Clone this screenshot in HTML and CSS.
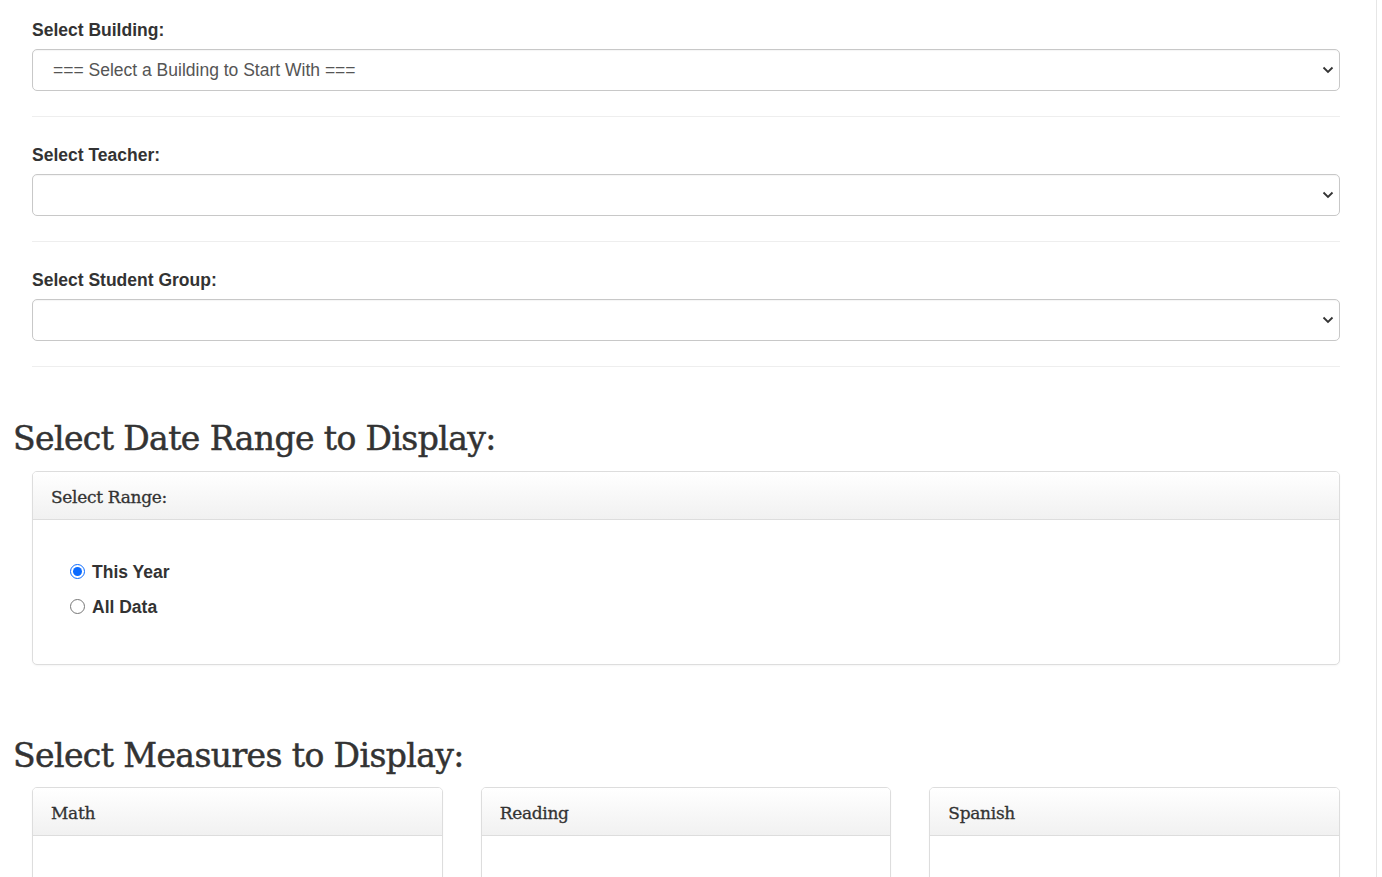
FILE: index.html
```html
<!DOCTYPE html>
<html>
<head>
<meta charset="utf-8">
<title>Select Data</title>
<link rel="stylesheet" href="styles.css">
</head>
<body>
<div class="page">
  <div class="filters">
    <div class="group">
      <label class="field-label" for="building">Select Building:</label>
      <div class="select-wrap">
        <select id="building" class="select">
          <option>=== Select a Building to Start With ===</option>
        </select>
        <svg class="chev" width="12" height="8" viewBox="0 0 12 8"><path d="M1.5 1.5 L6 6 L10.5 1.5" fill="none" stroke="#333" stroke-width="1.8"/></svg>
      </div>
    </div>
    <hr class="sep">
    <div class="group">
      <label class="field-label" for="teacher">Select Teacher:</label>
      <div class="select-wrap">
        <select id="teacher" class="select"><option></option></select>
        <svg class="chev" width="12" height="8" viewBox="0 0 12 8"><path d="M1.5 1.5 L6 6 L10.5 1.5" fill="none" stroke="#333" stroke-width="1.8"/></svg>
      </div>
    </div>
    <hr class="sep">
    <div class="group">
      <label class="field-label" for="group">Select Student Group:</label>
      <div class="select-wrap">
        <select id="group" class="select"><option></option></select>
        <svg class="chev" width="12" height="8" viewBox="0 0 12 8"><path d="M1.5 1.5 L6 6 L10.5 1.5" fill="none" stroke="#333" stroke-width="1.8"/></svg>
      </div>
    </div>
    <hr class="sep">
  </div>

  <h2 class="section-title">Select Date Range to Display:</h2>
  <div class="panel range-panel">
    <div class="panel-heading">Select Range:</div>
    <div class="panel-body range-body">
      <label class="radio-row"><input type="radio" name="range" checked><span>This Year</span></label>
      <label class="radio-row"><input type="radio" name="range"><span>All Data</span></label>
    </div>
  </div>

  <h2 class="section-title measures-title">Select Measures to Display:</h2>
  <div class="measures">
    <div class="panel">
      <div class="panel-heading">Math</div>
      <div class="panel-body measure-body"></div>
    </div>
    <div class="panel">
      <div class="panel-heading">Reading</div>
      <div class="panel-body measure-body"></div>
    </div>
    <div class="panel">
      <div class="panel-heading">Spanish</div>
      <div class="panel-body measure-body"></div>
    </div>
  </div>
</div>
</body>
</html>
```

FILE: styles.css
```css
html, body {
  margin: 0;
  padding: 0;
  background: #fff;
  overflow: hidden;
}
body {
  font-family: "Liberation Sans", Arial, sans-serif;
  color: #333;
  font-size: 17.5px;
}
.page {
  width: 1377px;
  height: 877px;
  border-right: 1px solid #e6e6e6;
  padding-left: 13px;
  box-sizing: border-box;
}
.filters {
  padding: 18px 0 0 19px;
  width: 1308px;
}
.field-label {
  display: block;
  font-weight: bold;
  font-size: 17.5px;
  line-height: 25px;
  margin-bottom: 6px;
}
.select-wrap {
  position: relative;
}
.select {
  display: block;
  width: 100%;
  height: 42px;
  border: 1px solid #c8c8c8;
  border-radius: 5px;
  background: #fff;
  font-family: "Liberation Sans", Arial, sans-serif;
  font-size: 17.5px;
  color: #555;
  padding: 0 20px;
  -webkit-appearance: none;
  appearance: none;
  box-shadow: inset 0 1px 1px rgba(0,0,0,0.04);
}
.chev {
  position: absolute;
  right: 6px;
  top: 17px;
}
.sep {
  border: 0;
  border-top: 1px solid #eee;
  margin: 25px 0 26px;
}
.section-title {
  font-family: "DejaVu Serif", serif;
  font-weight: normal;
  font-size: 33px;
  letter-spacing: -0.6px;
  -webkit-text-stroke: 0.5px #333;
  color: #333;
  line-height: 40px;
  margin: 52px 0 12px;
}
.panel {
  border: 1px solid #ddd;
  border-radius: 5px;
  background: #fff;
  box-shadow: 0 1px 2px rgba(0,0,0,0.04);
  overflow: hidden;
}
.range-panel {
  margin-left: 19px;
  width: 1308px;
  box-sizing: border-box;
}
.panel-heading {
  height: 48px;
  box-sizing: border-box;
  border-bottom: 1px solid #ddd;
  background: linear-gradient(to bottom, #ffffff 0%, #f1f1f1 100%);
  font-family: "DejaVu Serif", serif;
  font-size: 17px;
  letter-spacing: -0.3px;
  -webkit-text-stroke: 0.3px #333;
  color: #333;
  padding: 2px 18px 0;
  display: flex;
  align-items: center;
}
.range-body {
  height: 144px;
  box-sizing: border-box;
  padding: 35px 37px 0;
  display: flex;
  flex-direction: column;
}
.radio-row {
  display: flex;
  align-items: center;
  height: 35px;
  font-weight: bold;
  font-size: 17.5px;
}
.radio-row input {
  width: 15px;
  height: 15px;
  margin: 0 7px 2px 0;
  accent-color: #0b6bff;
}
.measures-title {
  margin: 71px 0 11px;
}
.measures {
  margin-left: 19px;
  width: 1308px;
  display: grid;
  grid-template-columns: repeat(3, 1fr);
  gap: 38px;
}
.measure-body {
  height: 80px;
}
```
